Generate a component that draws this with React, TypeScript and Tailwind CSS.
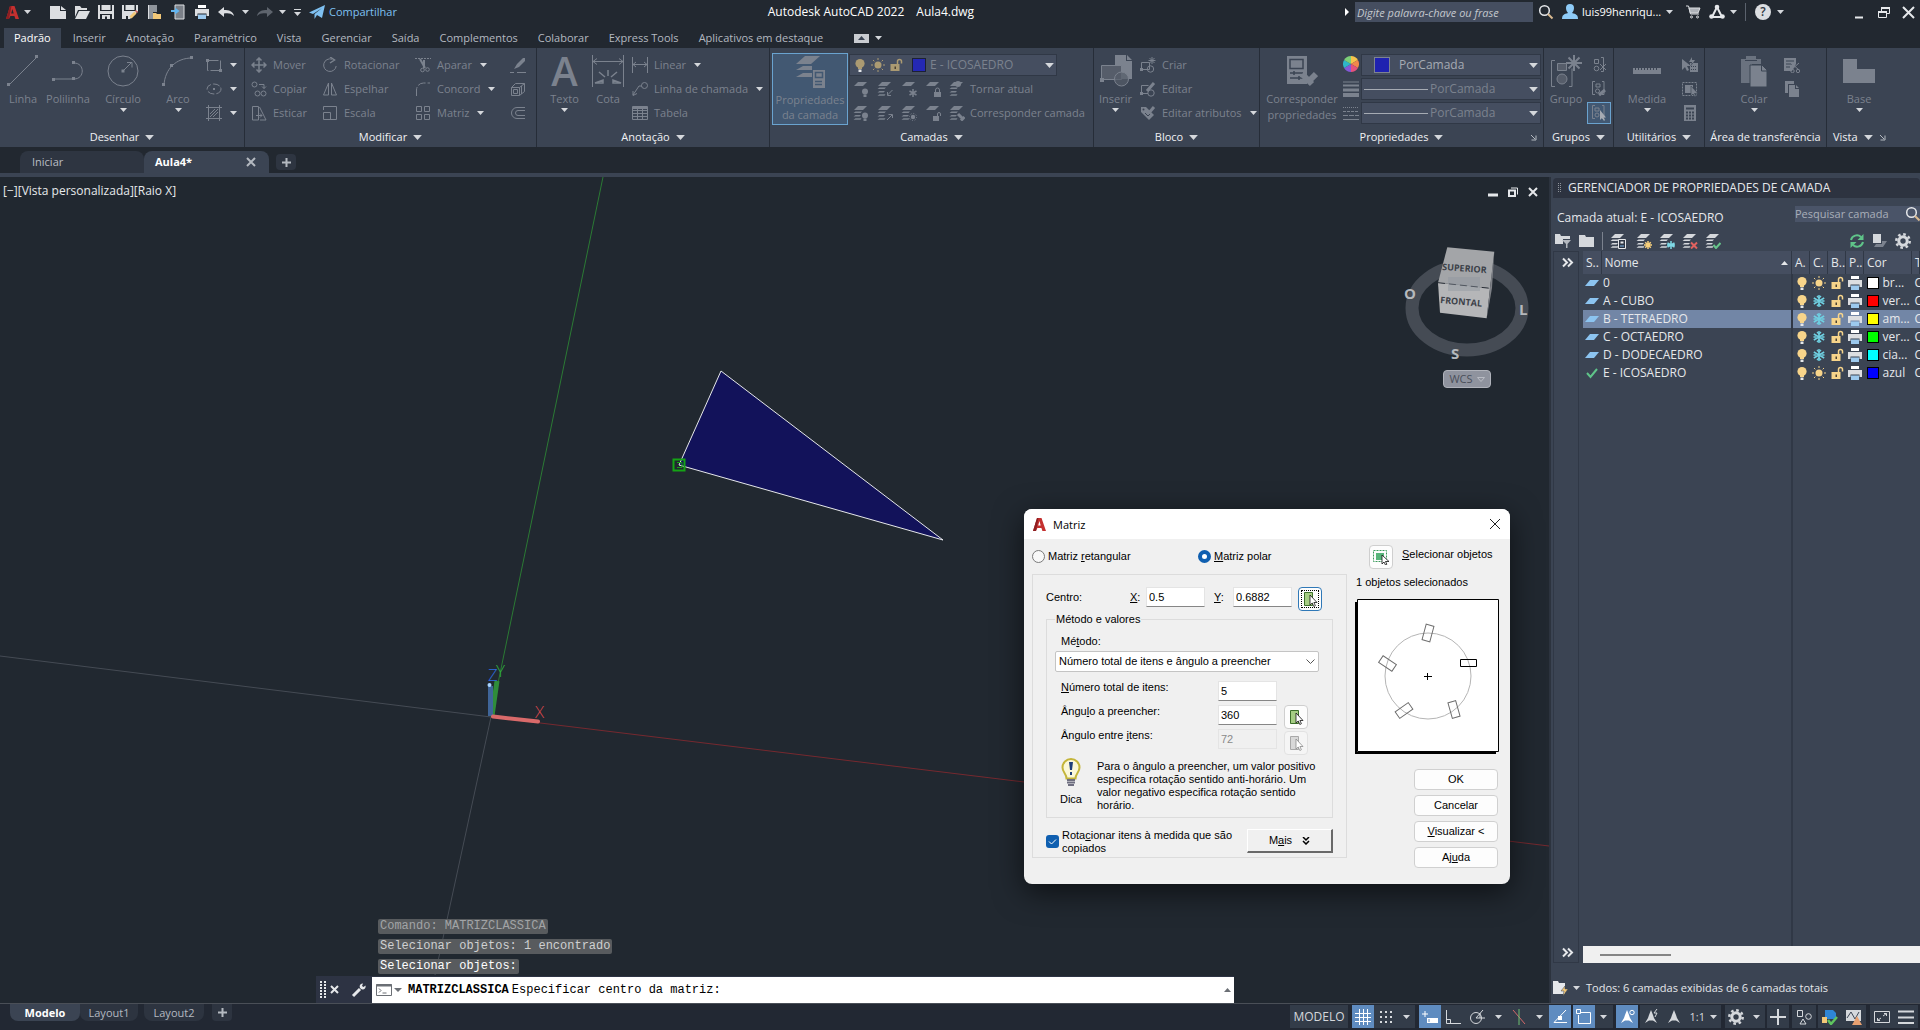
import type { ReactNode } from 'react';

interface IconProps {
  children: ReactNode;
  size?: number;
  className?: string;
}

function Ico({ children, size = 16, className = '' }: IconProps) {
  return (
    <svg
      width={size}
      height={size}
      viewBox={`0 0 ${size} ${size}`}
      fill="none"
      stroke="currentColor"
      className={`shrink-0 ${className}`}
      aria-hidden="true"
    >
      {children}
    </svg>
  );
}

function Caret({ className = '', large = false }: { className?: string; large?: boolean }) {
  return (
    <svg width={large ? 9 : 7} height={large ? 5 : 4} viewBox="0 0 7 4" className={`shrink-0 ${className}`} aria-hidden="true">
      <path d="M0 0h7L3.500 4z" fill="#d5d8dc" />
    </svg>
  );
}

function AutocadLogo({ className = '' }: { className?: string }) {
  return (
    <svg width="15" height="15" viewBox="0 0 15 15" className={`shrink-0 ${className}`} aria-hidden="true">
      <path d="M1 14L5 1h4.500L14 14h-3.600l-1-3H5.400l-1.400 3zM6.200 8.500h2.500L7.400 4z" fill="#c4302f" fillRule="evenodd" />
      <path d="M1 14L5 1h1.500L4 14z" fill="#8c1f22" />
    </svg>
  );
}

/* ---------- layer glyphs ---------- */

type Badge = 'bulb' | 'sun' | 'snow' | 'lock' | 'unlock' | 'in' | 'out' | 'brush' | 'dot' | 'star' | 'freeze' | 'delete' | 'check' | 'doc';

function BadgeShape({ badge }: { badge: Badge }) {
  switch (badge) {
    case 'bulb':
      return <g stroke="none" fill="currentColor"><circle cx="12" cy="10.500" r="3" /><path d="M10.500 13.500h3V16h-3z" /></g>;
    case 'sun':
      return <g><circle cx="12" cy="12" r="2.200" fill="currentColor" stroke="none" /><circle cx="12" cy="12" r="3.600" strokeDasharray="1 1.800" /></g>;
    case 'snow':
      return <path d="M12 8v8M8.500 10l7 4M15.500 10l-7 4" strokeWidth="1.500" />;
    case 'lock':
      return <g><path d="M9 11h7v5H9z" fill="currentColor" stroke="none" /><path d="M10.500 11V9a2 2 0 014 0v2" /></g>;
    case 'unlock':
      return <g><path d="M8 11h6v5H8z" fill="currentColor" stroke="none" /><path d="M12.500 11V9a1.500 1.500 0 013 0v2" /></g>;
    case 'in':
      return <path d="M15.500 9l-5 5M10.500 11v3.500H14" />;
    case 'out':
      return <path d="M10 15l5-5M11.500 9.500H15.500V13" />;
    case 'brush':
      return <path d="M9 9l5 5M12 15.500l3.500-3.500" strokeWidth="3" />;
    case 'dot':
      return <circle cx="9" cy="3" r="3" fill="currentColor" stroke="none" />;
    case 'star':
      return <path d="M12 8v8M8 12h8M9.200 9.200l5.600 5.600M14.800 9.200l-5.600 5.600" stroke="#f6cf7c" strokeWidth="1.500" />;
    case 'freeze':
      return <path d="M12 8v8M8.500 10l7 4M15.500 10l-7 4M8 12h8" stroke="#7fd9e6" strokeWidth="1.500" />;
    case 'delete':
      return <path d="M9 9.500l6 6M15 9.500l-6 6" stroke="#e0625f" strokeWidth="2" />;
    case 'check':
      return <path d="M8.500 12l2.500 3 4.500-5" stroke="#67c58b" strokeWidth="2" />;
    case 'doc':
      return <g><path d="M8.500 6.500h7v9h-7z" fill="#2d3543" stroke="#e6e8eb" /><path d="M10.500 8.500h3v2h-3z" fill="#e6e8eb" stroke="none" /><path d="M10 13h4" stroke="#7fb6e8" /></g>;
  }
}

function LayerIcon({ badge, single = false }: { badge: Badge; single?: boolean }) {
  return (
    <Ico>
      <g stroke="none" fill="currentColor">
        <path d="M5 1h9l-4 4H1z" />
        {!single && <path d="M2.500 6.500H9L7.500 8h-7zM2.500 10H8l-1.500 1.500h-6zM2.500 13.300h6L7.500 14.800h-7z" />}
      </g>
      <BadgeShape badge={badge} />
    </Ico>
  );
}

function Bulb({ color = '#f7d48a' }: { color?: string }) {
  return (
    <Ico>
      <circle cx="8" cy="6.500" r="4.600" fill={color} stroke="none" />
      <path d="M6 10h4v2H6z" fill={color} stroke="none" />
      <path d="M6.500 12.500h3V15h-3z" fill="#e6e8eb" stroke="none" />
    </Ico>
  );
}

function Sun({ color = '#f7d48a' }: { color?: string }) {
  return (
    <Ico>
      <circle cx="8" cy="8" r="3.500" fill={color} stroke="none" />
      <path d="M8 1v2M8 13v2M1 8h2M13 8h2M3 3l1.300 1.300M11.700 11.700L13 13M13 3l-1.300 1.300M4.300 11.700L3 13" stroke={color} />
    </Ico>
  );
}

function Snow() {
  return (
    <Ico>
      <g stroke="#6fd0e2" strokeWidth="1.500">
        <path d="M8 2v12M2.800 5l10.400 6M13.200 5L2.800 11" />
        <path d="M6 3l2 2 2-2M6 13l2-2 2 2M2.500 8h3M10.500 8h3" />
      </g>
    </Ico>
  );
}

function Unlock({ color = '#f7d48a' }: { color?: string }) {
  return (
    <Ico>
      <path d="M2.500 7h9v7h-9z" fill={color} stroke="none" />
      <path d="M9.500 7.500V4.500a2 2 0 014 0v2" stroke={color} strokeWidth="1.500" />
      <path d="M6.500 9.500h1.500V12H6.500z" fill="#4a4030" stroke="none" />
    </Ico>
  );
}

function Printer({ className = '' }: { className?: string }) {
  return (
    <Ico className={className}>
      <g stroke="none">
        <path d="M4 1h8v3H4z" fill="#fff" />
        <path d="M1 5h14v7h-2.500V9.500h-9V12H1z" fill="#dcdee1" />
        <path d="M4 10.500h8V15H4z" fill="#9cc9ee" />
      </g>
    </Ico>
  );
}

function Magnifier() {
  return (
    <Ico>
      <circle cx="6.500" cy="6.500" r="4.800" stroke="#e6e8eb" strokeWidth="1.500" />
      <path d="M10 10l4.500 4.500" stroke="#d9b98f" strokeWidth="2" />
    </Ico>
  );
}

/* ---------- title bar ---------- */

function QuickAccess() {
  const btn = 'flex w-6 justify-center text-[#dcdee1]';
  return (
    <div className="flex items-center">
      <button aria-label="Menu do aplicativo" className="flex items-center gap-1 pl-[5px] pr-[15px]">
        <AutocadLogo />
        <Caret />
      </button>
      <button aria-label="Novo" className={btn}>
        <Ico><path d="M0 2h10v5h6v8H0zM11 2l5 4h-5z" fill="currentColor" stroke="none" /></Ico>
      </button>
      <button aria-label="Abrir" className={btn}>
        <Ico><path d="M1 2h5l1.500 2H13v2H4L1 13zM5 7h11l-4 8H1z" fill="currentColor" stroke="none" /></Ico>
      </button>
      <button aria-label="Salvar" className={btn}>
        <Ico><path d="M0 1h2v6h12V1h2v14h-2v-5H2v5H0zM3.500 1h9v5h-9zM4 11h8v4h-3v-2.500H7V15H4z" fill="currentColor" stroke="none" /></Ico>
      </button>
      <button aria-label="Salvar como" className={btn}>
        <Ico>
          <path d="M0 1h2v6h12V1h2v6L8 15H6v-3H4v3H0zM3.500 1h9v5h-9z" fill="currentColor" stroke="none" />
          <path d="M8.500 13.500l5-5" stroke="#f3c878" strokeWidth="3" />
          <path d="M14 8l1-1" stroke="#d9645c" strokeWidth="3" />
        </Ico>
      </button>
      <button aria-label="Abrir da web" className={btn}>
        <Ico>
          <path d="M2 1h9v7H7v7H2z" fill="#8f949b" stroke="none" />
          <path d="M7 9h3l1 1h4v5H7z" fill="#f3c878" stroke="none" />
          <path d="M2.500 1v14" />
        </Ico>
      </button>
      <button aria-label="Salvar na web" className={btn}>
        <Ico>
          <path d="M5 1h9v14H5z" fill="#7b8088" stroke="#dcdee1" />
          <path d="M1 6h4V3.500L9.500 7 5 10.500V8H1z" fill="#63b5f0" stroke="none" />
        </Ico>
      </button>
      <button aria-label="Plotar" className={btn}><Printer /></button>
      <button aria-label="Desfazer" className={btn}>
        <Ico><path d="M0 8l6-5v3c5 0 9 1 10 6-3-3-6-3-10-2.500V13z" fill="currentColor" stroke="none" /></Ico>
      </button>
      <Caret className="ml-1 mr-1" />
      <button aria-label="Refazer" className="flex w-6 justify-center text-[#5e646d]">
        <Ico><path d="M16 8l-6-5v3C5 6 1 7 0 12c3-3 6-3 10-2.500V13z" fill="currentColor" stroke="none" /></Ico>
      </button>
      <Caret className="ml-[2px]" />
      <span className="mx-2 flex flex-col items-center gap-[2px]">
        <span className="h-px w-[7px] bg-[#d5d8dc]" />
        <Caret />
      </span>
      <button className="flex items-center gap-1 text-[11px] text-[#7fc1f2]">
        <Ico><path d="M0 8.500L16 1l-3 13-5-3-2.500 4V10L13 4l-9 6z" fill="currentColor" stroke="none" /></Ico>
        Compartilhar
      </button>
    </div>
  );
}

function TitleBar() {
  return (
    <header className="flex h-6 items-center justify-between text-white">
      <QuickAccess />
      <h1 className="flex gap-3 whitespace-nowrap">
        <span>Autodesk AutoCAD 2022</span>
        <span>Aula4.dwg</span>
      </h1>
      <div className="flex items-center">
        <svg width="4" height="8" viewBox="0 0 4 8" className="mr-[6px]" aria-hidden="true"><path d="M0 0l4 4-4 4z" fill="#fff" /></svg>
        <input
          aria-label="Pesquisa"
          placeholder="Digite palavra-chave ou frase"
          className="h-5 w-[178px] bg-[#454e60] px-[2px] text-[11px] italic placeholder:text-[#c3c7cd]"
        />
        <button aria-label="Pesquisar" className="ml-[5px]"><Magnifier /></button>
        <button className="ml-2 flex items-center gap-1">
          <Ico><path d="M8 0a4 4 0 014 4c0 2-1 4-2 5 4 1 6 2 6 6H0c0-4 2-5 6-6-1-1-2-3-2-5a4 4 0 014-4z" fill="#8ecbf7" stroke="none" /></Ico>
          <span className="w-20 whitespace-nowrap text-left text-[11px]">luis99henriqu...</span>
          <Caret />
        </button>
        <button aria-label="Autodesk App Store" className="ml-3 text-[#dcdee1]">
          <Ico><path d="M1 2h2.500l2 8H14" /><path d="M4 4h11l-2 5H5.300z" fill="#aeb2b8" /><circle cx="6.500" cy="13" r="1" /><circle cx="12.500" cy="13" r="1" /></Ico>
        </button>
        <button aria-label="Conectividade" className="ml-2 flex items-center gap-[5px] text-[#e6e8eb]">
          <Ico><path d="M8 3l5 10H3z" strokeWidth="2" /><circle cx="8" cy="3" r="2.300" fill="currentColor" stroke="none" /><circle cx="2.500" cy="12.500" r="2.300" fill="currentColor" stroke="none" /><circle cx="13.500" cy="12.500" r="2.300" fill="currentColor" stroke="none" /></Ico>
          <Caret />
        </button>
        <span className="ml-2 h-[18px] w-px bg-[#5b626d]" />
        <button aria-label="Ajuda" className="ml-[9px] flex items-center gap-[6px]">
          <span className="flex size-4 items-center justify-center rounded-full bg-[#dcdee1] text-[12px] leading-4 font-semibold text-[#30363f]">?</span>
          <Caret />
        </button>
        <div className="ml-[68px] mr-1 flex gap-2 text-[#e6e8eb]">
          <button aria-label="Minimizar"><Ico><path d="M3 13.500h8" strokeWidth="2" /></Ico></button>
          <button aria-label="Restaurar"><Ico><path d="M5.500 4.500h8v5h-8z" /><path d="M5 4h9" strokeWidth="2" /><path d="M2.500 8.500h8v5h-8z" fill="#222830" /><path d="M2 8h9" strokeWidth="2" /></Ico></button>
          <button aria-label="Fechar"><Ico><path d="M3 3l11 11M14 3L3 14" strokeWidth="2" /></Ico></button>
        </div>
      </div>
    </header>
  );
}

const ribbonTabs = ['Padrão', 'Inserir', 'Anotação', 'Paramétrico', 'Vista', 'Gerenciar', 'Saída', 'Complementos', 'Colaborar', 'Express Tools', 'Aplicativos em destaque'];

function RibbonTabs() {
  return (
    <nav className="mt-1 flex h-5 items-center pl-1 text-[11px] text-[#b4b9c0]">
      {ribbonTabs.map((t, i) => (
        <button
          key={t}
          className={`h-5 whitespace-nowrap px-[10px] ${i === 0 ? 'mr-[2px] bg-[#3b4453] text-white' : ''}`}
        >
          {t}
        </button>
      ))}
      <button aria-label="Minimizar faixa de opções" className="ml-[21px] flex items-center gap-[6px]">
        <span className="flex h-[9px] w-[15px] items-center justify-center bg-[#c9ccd1]">
          <svg width="7" height="4" viewBox="0 0 7 4" aria-hidden="true"><path d="M0 4h7L3.500 0z" fill="#3b4453" /></svg>
        </span>
        <Caret />
      </button>
    </nav>
  );
}

/* ---------- ribbon ---------- */

interface PanelProps {
  title: string;
  className: string;
  caret?: boolean;
  launcher?: boolean;
  children: ReactNode;
}

function Panel({ title, className, caret = true, launcher = false, children }: PanelProps) {
  return (
    <section className={`relative flex shrink-0 flex-col border-r border-[#262d38] pt-[5px] ${className}`}>
      <div className="flex h-[72px]">{children}</div>
      <h2 className="flex h-[22px] items-center justify-center gap-[6px] pt-[2px] whitespace-nowrap text-[#f0f1f3]">
        {title}
        {caret && <Caret large />}
        {launcher && (
          <Ico size={7} className="absolute right-[6px] text-[#b4b9c0]"><path d="M1 1l4 4M6 1.500V6H1.500" /></Ico>
        )}
      </h2>
    </section>
  );
}

function Big({ label, icon, className = '', arrow = false }: { label: ReactNode; icon: ReactNode; className?: string; arrow?: boolean }) {
  return (
    <button className={`flex shrink-0 flex-col items-center pt-[2px] leading-4 whitespace-nowrap ${className}`}>
      <span className="mb-1 flex h-8 w-8 items-center justify-center">{icon}</span>
      <span>{label}</span>
      {arrow && <Caret className="mt-px" />}
    </button>
  );
}

function Small({ label, icon, arrow = false }: { label?: string; icon: ReactNode; arrow?: boolean }) {
  return (
    <button className="flex h-6 items-center gap-[6px] whitespace-nowrap">
      {icon}
      {label}
      {arrow && <Caret className="ml-[2px]" />}
    </button>
  );
}

function Col({ children, className = '' }: { children: ReactNode; className?: string }) {
  return <div className={`flex shrink-0 flex-col items-start ${className}`}>{children}</div>;
}

function DrawPanel() {
  return (
    <Panel title="Desenhar" className="w-[245px]">
      <Big className="w-[46px]" label="Linha" icon={<Ico size={32}><path d="M2 30L30 2" /><path d="M0 28h3v3H0zM28 0h3v3h-3z" fill="currentColor" stroke="none" /></Ico>} />
      <Big className="w-11" label="Polilinha" icon={<Ico size={32}><path d="M1 24h21c11 0 11-16 0-16" /><path d="M0 23h3v3H0zM20 22h3v3h-3zM20 6h3v3h-3z" fill="currentColor" stroke="none" /></Ico>} />
      <Big className="ml-1 w-[58px]" arrow label="Círculo" icon={<Ico size={32}><circle cx="16" cy="16" r="15" /><path d="M16 16l8-8M20 7.500h5v5" /><path d="M14.500 14.500h3v3h-3z" fill="currentColor" stroke="none" /></Ico>} />
      <Big className="w-[52px]" arrow label="Arco" icon={<Ico size={32}><path d="M2 30C3 14 14 3 30 3" /><path d="M0 28h3v3H0zM8 9h3v3H8zM28 1h3v3h-3z" fill="currentColor" stroke="none" /></Ico>} />
      <Col className="ml-[2px]">
        <Small arrow icon={<Ico><path d="M1.500 3.500h13v10h-13z" strokeDasharray="11 2 20 2" /><path d="M0 2h3v3H0zM13 12h3v3h-3z" fill="currentColor" stroke="none" /></Ico>} />
        <Small arrow icon={<Ico><ellipse cx="8" cy="8" rx="7" ry="5" strokeDasharray="7 2" /><path d="M7 7h2v2H7z" fill="currentColor" stroke="none" /></Ico>} />
        <Small arrow icon={<Ico><path d="M0 2.500h16M0 13.500h16M2.500 0v16M13.500 0v16M4 9l5-5M4 12l8-8M7 12l5-5" /></Ico>} />
      </Col>
    </Panel>
  );
}

function ModifyPanel() {
  return (
    <Panel title="Modificar" className="w-[292px]">
      <Col className="ml-[6px] w-[71px]">
        <Small label="Mover" icon={<Ico><path d="M8 1v14M1 8h14M5.500 3.500L8 1l2.500 2.500M5.500 12.500L8 15l2.500-2.500M3.500 5.500L1 8l2.500 2.500M12.500 5.500L15 8l-2.500 2.500" strokeWidth="1.500" /></Ico>} />
        <Small label="Copiar" icon={<Ico><circle cx="3.500" cy="3.500" r="2.500" /><circle cx="6.500" cy="12.500" r="2.500" /><circle cx="12.500" cy="12.500" r="2.500" /><path d="M8 3.500h5v4M11 5.500l2 2 2-2" /></Ico>} />
        <Small label="Esticar" icon={<Ico><path d="M1.500 15V1.500h6V15zM8.500 2l6.500 13H9M5 10.500h6M9 8.500l2 2-2 2" /></Ico>} />
      </Col>
      <Col className="w-[93px]">
        <Small label="Rotacionar" icon={<Ico><path d="M10 2.200A6.300 6.300 0 1014.200 9" /><path d="M8 0l4.500 3L8 6" strokeWidth="1.500" /></Ico>} />
        <Small label="Espelhar" icon={<Ico><path d="M6.500 2v12h-5zM9.500 2v12h5z" /></Ico>} />
        <Small label="Escala" icon={<Ico><path d="M1.500 5V1.500h13v13H8M1.500 7.500h7v7h-7z" /></Ico>} />
      </Col>
      <Col className="w-[95px]">
        <Small arrow label="Aparar" icon={<Ico><path d="M0 1.500h16" strokeDasharray="2 1" /><path d="M5 2l5 9M9 3v8" strokeWidth="2" /><circle cx="7.500" cy="13" r="1.800" /><circle cx="12.500" cy="12.500" r="1.800" /></Ico>} />
        <Small arrow label="Concord" icon={<Ico><path d="M1.500 15V9a7 7 0 017-7H15" strokeDasharray="9 2 8 2" /></Ico>} />
        <Small arrow label="Matriz" icon={<Ico><path d="M1.500 1.500h5v5h-5zM9.500 1.500h5v5h-5zM1.500 9.500h5v5h-5zM9.500 9.500h5v5h-5z" /></Ico>} />
      </Col>
      <Col>
        <Small icon={<Ico><path d="M4 12l3-5 6-6h2v3l-6 6z" fill="currentColor" stroke="none" /><path d="M0 15.500h4M7 15.500h9" /></Ico>} />
        <Small icon={<Ico><path d="M1.500 6.500h8v8h-8zM3.500 8.500h4v4h-4zM1.500 6.500l4-4h9l-5 4M14.500 2.500v8l-5 4M11.500 5v8" /></Ico>} />
        <Small icon={<Ico><path d="M15 2.500H7a5.500 5.500 0 000 11h8M15 5.500H8a2.500 2.500 0 000 5h7" /></Ico>} />
      </Col>
    </Panel>
  );
}

function AnnotatePanel() {
  return (
    <Panel title="Anotação" className="w-[233px]">
      <Big className="ml-[5px] w-[45px]" arrow label="Texto" icon={<span className="text-[40px] leading-8 font-semibold">A</span>} />
      <Big className="w-[42px]" label="Cota" icon={<Ico size={32}><path d="M.5 0v32M31.500 0v32M1 6.500h30M5 3.500L1 6.500l4 3M27 3.500l4 3-4 3" /><path d="M3 28l8-3v3zM29 28l-8-3v3zM7 17l6 5M16 15v6M25 17l-6 5" strokeWidth="1.500" /></Ico>} />
      <Col className="ml-[3px]">
        <Small arrow label="Linear" icon={<Ico><path d="M.5 0v16M15.500 0v16M1 7.500h14M4 5L1 7.500 4 10M12 5l3 2.500L12 10" /></Ico>} />
        <Small arrow label="Linha de chamada" icon={<Ico><path d="M1 14l6-9h3M1 10v4.500l4-2" /><circle cx="12.500" cy="4.500" r="3" /></Ico>} />
        <Small label="Tabela" icon={<Ico><path d="M.5 1.500h15v13H.5zM.5 5.500h15M.5 8.500h15M.5 11.500h15M5.500 4v10M10.500 4v10" /><path d="M1 3h14" strokeWidth="2" /></Ico>} />
      </Col>
    </Panel>
  );
}

function LayerPanelRibbon() {
  const dim = '#ab9a72';
  return (
    <Panel title="Camadas" className="w-[324px]">
      <button className="ml-[2px] flex w-[76px] shrink-0 flex-col items-center border border-[#6aa3cf] bg-[#425872] leading-[15px]">
        <Ico size={32} className="mt-[2px] mb-1">
          <g fill="currentColor" stroke="none">
            <path d="M11 0h15l-9 8H2zM9 10h9v4H2zM9 17h9v4H2z" />
            <path d="M19 14h12v18H19z" />
          </g>
          <path d="M21.500 16.500h7v5h-7zM21 25.500h7M21 28.500h7" stroke="#425872" strokeWidth="1.500" />
        </Ico>
        <span>Propriedades</span>
        <span>da camada</span>
      </button>
      <div className="ml-px flex flex-col">
        <label className="mt-[1px] flex h-[22px] w-[208px] items-center gap-[2px] border border-[#303846] bg-[#454e60] pl-[2px] text-[12px]">
          <Bulb color={dim} />
          <Sun color={dim} />
          <Unlock color={dim} />
          <span className="ml-[6px] size-[14px] shrink-0 border border-[#1c2133] bg-[#2428b4]" />
          <select aria-label="Camada" className="ml-[2px] min-w-0 flex-1 appearance-none bg-transparent">
            <option>E - ICOSAEDRO</option>
          </select>
          <Caret large className="mr-[2px]" />
        </label>
        <div className="mt-[1px] ml-1 flex h-6 items-center gap-2">
          <LayerIcon single badge="bulb" />
          <LayerIcon badge="in" />
          <LayerIcon single badge="snow" />
          <LayerIcon single badge="lock" />
          <button className="flex items-center gap-[5px]"><LayerIcon badge="dot" />Tornar atual</button>
        </div>
        <div className="ml-1 flex h-6 items-center gap-2">
          <LayerIcon badge="bulb" />
          <LayerIcon badge="out" />
          <LayerIcon badge="sun" />
          <LayerIcon single badge="unlock" />
          <button className="flex items-center gap-[5px] whitespace-nowrap"><LayerIcon badge="brush" />Corresponder camada</button>
        </div>
      </div>
    </Panel>
  );
}

function BlockPanel() {
  return (
    <Panel title="Bloco" className="w-[166px]">
      <Big className="w-[43px]" arrow label="Inserir" icon={<Ico size={32}><path d="M15 0h11v6h6v18H15z" fill="currentColor" stroke="none" /><path d="M1.500 10.500h20v14h-20z" fill="#565d6a" /><circle cx="21.500" cy="24" r="7" fill="#565d6a" fillOpacity=".7" /><path d="M27 0l5 5h-5zM0 23h4v4H0z" fill="currentColor" stroke="none" /></Ico>} />
      <Col className="ml-[3px]">
        <Small label="Criar" icon={<Ico><path d="M1.500 5.500h8v7h-8z" /><circle cx="10.500" cy="12" r="3.200" /><path d="M12 0v7M8.500 3.500h7M9.500 1l5 5M14.500 1l-5 5" /><path d="M0 11h3v3H0z" fill="currentColor" stroke="none" /></Ico>} />
        <Small label="Editar" icon={<Ico><path d="M1.500 4.500h7M1.500 4.500v8H8" /><circle cx="11" cy="12" r="3.200" /><path d="M7 10l7-8" strokeWidth="3" /><path d="M0 11h3v3H0z" fill="currentColor" stroke="none" /></Ico>} />
        <Small arrow label="Editar atributos" icon={<Ico><path d="M1 2h5l8 8-5 5-8-8z" fill="currentColor" stroke="none" /><path d="M8 9l6-7" strokeWidth="3" /><circle cx="3.500" cy="4.500" r="1" fill="#3b4453" stroke="none" /><path d="M5 8l3 3 2-2" stroke="#3b4453" /></Ico>} />
      </Col>
    </Panel>
  );
}

function PropSelect({ label, swatch = false }: { label: string; swatch?: boolean }) {
  return (
    <label className="flex h-[22px] w-[180px] items-center border border-[#303846] bg-[#454e60] text-[12px]">
      {swatch ? (
        <span className="ml-3 mr-[9px] size-4 shrink-0 border border-[#7d8390] bg-[#1f22b0]" />
      ) : (
        <span className="ml-[2px] h-px w-16 shrink-0 bg-[#a6abb3]" />
      )}
      <select aria-label={label} className={`min-w-0 flex-1 appearance-none bg-transparent ${swatch ? 'text-[#a6abb3]' : 'pl-[2px]'}`}>
        <option>PorCamada</option>
      </select>
      <Caret large className="mr-[2px]" />
    </label>
  );
}

function PropertiesPanel() {
  return (
    <Panel title="Propriedades" className="w-[284px]" launcher>
      <Big
        className="ml-[2px] w-20"
        label={<>Corresponder<br />propriedades</>}
        icon={<Ico size={32}><path d="M1 1h20v28H1z" fill="currentColor" stroke="none" /><path d="M4 4.500h13v9H4zM4 18h13M4 23h13M8 16v4M13 21v4" stroke="#3b4453" strokeWidth="1.500" /><path d="M16 19l10 10M24 25l6-6" strokeWidth="6" /></Ico>}
      />
      <Col className="ml-[1px]">
        <div className="mt-[1px] flex h-[23px] items-start gap-[2px]">
          <svg width="16" height="16" viewBox="0 0 16 16" className="mt-[2px]" aria-hidden="true">
            <path d="M8 8V0A8 8 0 0114.900 4z" fill="#f6c34c" />
            <path d="M8 8l6.900-4a8 8 0 010 8z" fill="#f2884b" />
            <path d="M8 8l6.900 4A8 8 0 018 16z" fill="#e5527c" />
            <path d="M8 8v8a8 8 0 01-6.900-4z" fill="#8458d8" />
            <path d="M8 8l-6.900 4a8 8 0 010-8z" fill="#2fb6c9" />
            <path d="M8 8L1.100 4A8 8 0 018 0z" fill="#7ccf78" />
          </svg>
          <PropSelect label="Cor do objeto" swatch />
        </div>
        <div className="flex h-6 items-center gap-[2px]">
          <Ico><path d="M0 1h16" /><path d="M0 4.500h16" strokeWidth="2" /><path d="M0 9h16" strokeWidth="3" /><path d="M0 14h16" strokeWidth="4" /></Ico>
          <PropSelect label="Espessura da linha" />
        </div>
        <div className="flex h-6 items-center gap-[2px]">
          <Ico><path d="M0 2.500h16" strokeDasharray="1 1" /><path d="M0 6.500h16" strokeDasharray="3 1" /><path d="M0 10.500h16" strokeDasharray="5 1" /><path d="M0 14.500h16" /></Ico>
          <PropSelect label="Tipo de linha" />
        </div>
      </Col>
    </Panel>
  );
}

function RibbonTail() {
  const bracket = <path d="M4 .5H1.500v13H4M11 .5h2v13h-2" />;
  return (
    <>
      <Panel title="Grupos" className="w-[70px]">
        <Big className="ml-[4px] w-9" label="Grupo" icon={<Ico size={32}><path d="M5 5.500H1.500v26H5M19 31.500h3v-18" /><path d="M7.500 8.500h9v7h-9z" fill="#565d6a" /><circle cx="12" cy="24" r="5" fill="#565d6a" /><path d="M24 0v16M16 8h16M18.500 2.500l11 11M29.500 2.500l-11 11" strokeWidth="2" /></Ico>} />
        <Col className="ml-[3px]">
          <div className="flex h-6 w-6 items-center justify-center"><Ico><path d="M3.500 2.500h4v4h-4zM10 .5h2.500v14H10" /><circle cx="5.500" cy="11.500" r="2.300" /><path d="M9 7l6 6M15 7l-6 6" /></Ico></div>
          <div className="flex h-6 w-6 items-center justify-center"><Ico>{bracket}<path d="M5 3h4v3H5z" /><circle cx="6.500" cy="10" r="2" /><path d="M8 14l6-5" strokeWidth="3" /></Ico></div>
          <button aria-label="Seleção de grupo" className="mt-[1px] flex h-[22px] w-6 items-center justify-center border border-[#6aa3cf] bg-[#425872]"><Ico>{bracket}<path d="M4 3h4v3H4z" /><circle cx="6" cy="10" r="2" /><path d="M9 5v10l2-2 2 3 1-1-1.500-2.500H15z" fill="#a6abb3" stroke="none" /></Ico></button>
        </Col>
      </Panel>
      <Panel title="Utilitários" className="w-[91px]">
        <Big className="ml-[8px] w-[50px]" arrow label="Medida" icon={<Ico size={32}><path d="M2 13h28v6H2z" fill="currentColor" stroke="none" /><path d="M4.500 13v2M7.500 13v2M10.500 13v2M13.500 13v2M16.500 13v2M19.500 13v2M22.500 13v2M25.500 13v2" stroke="#3b4453" /></Ico>} />
        <Col className="ml-[10px]">
          <Small icon={<Ico><path d="M0 2v11l3-3 2 4 2-1-2-4h4zM10 0l-3 5h3l-1 4 4-6h-3zM8 6h8v9H8z" fill="currentColor" stroke="none" /><path d="M9 9.500h6M9 12.500h6" stroke="#3b4453" strokeDasharray="1 1" /></Ico>} />
          <Small icon={<Ico><path d="M.5 1.500h14v13H.5z" strokeDasharray="2 1" /><path d="M3 4h8v8H3z" fill="currentColor" stroke="none" /><path d="M9 5v10l2-2 2 3 1-1-1.500-2.500H16z" fill="currentColor" stroke="#3b4453" strokeWidth=".6" /></Ico>} />
          <Small icon={<Ico><path d="M2 0h12v16H2z" fill="currentColor" stroke="none" /><path d="M4 3.500h8" stroke="#3b4453" strokeWidth="2" /><path d="M4 7.500h8M4 10.500h8M4 13.500h8" stroke="#3b4453" strokeWidth="2" strokeDasharray="2 1" /></Ico>} />
        </Col>
      </Panel>
      <Panel title="Área de transferência" className="w-[122px]" caret={false}>
        <Big className="ml-[24px] w-[50px]" arrow label="Colar" icon={<Ico size={32}><path d="M3 4h5V1h10v3h5v5h-9v19H3z" fill="currentColor" stroke="none" opacity=".75" /><path d="M7 5.500h12" stroke="#3b4453" /><path d="M12 10h12l5 5v17H12z" fill="currentColor" stroke="#3b4453" /><path d="M23.500 10v6H29" stroke="#3b4453" /></Ico>} />
        <Col className="ml-[5px]">
          <Small icon={<Ico><path d="M0 1h12v6l-4 7H0z" fill="currentColor" stroke="none" /><path d="M2 4h8M2 7h6M2 10h4" stroke="#3b4453" /><path d="M7 6l8 7M15 6l-8 7" /><circle cx="8.500" cy="14" r="1.700" /><circle cx="14" cy="14" r="1.700" /></Ico>} />
          <Small icon={<Ico><path d="M1 0h9v3H4v9H1z" fill="currentColor" stroke="none" /><path d="M5 4h6v4h4v8H5zM12 4l3 3h-3z" fill="currentColor" stroke="none" /></Ico>} />
        </Col>
      </Panel>
      <section className="relative flex flex-1 flex-col pt-[5px]">
        <div className="flex h-[72px]">
          <Big className="ml-[7px] w-[50px]" arrow label="Base" icon={<Ico size={32}><path d="M0 4h14v10h18v14H0z" fill="currentColor" stroke="none" /></Ico>} />
        </div>
        <h2 className="flex h-[22px] items-center gap-[6px] pt-[2px] pl-[6px] text-[#f0f1f3]">
          Vista
          <Caret large />
          <Ico size={7} className="text-[#b4b9c0]"><path d="M1 1l4 4M6 1.500V6H1.500" /></Ico>
        </h2>
      </section>
    </>
  );
}

function Ribbon() {
  return (
    <div className="flex h-[99px] bg-[#3b4453] text-[11px] text-[#7b828e]">
      <DrawPanel />
      <ModifyPanel />
      <AnnotatePanel />
      <LayerPanelRibbon />
      <BlockPanel />
      <PropertiesPanel />
      <RibbonTail />
    </div>
  );
}

function FileTabs() {
  return (
    <nav className="flex h-[26px] items-end border-b-4 border-[#3b4453] pl-5 text-[11px] box-content">
      <button className="h-[22px] w-[124px] rounded-t-lg bg-[#2e3541] pl-3 text-left text-[#b9bdc4]">Iniciar</button>
      <div className="flex h-[22px] w-[125px] items-center rounded-t-lg bg-[#3b4453] pl-[11px]">
        <button className="font-bold text-white">Aula4*</button>
        <button aria-label="Fechar Aula4" className="ml-auto mr-[13px] text-[#b4b9c0]"><Ico size={10}><path d="M1 1l8 8M9 1L1 9" strokeWidth="2" /></Ico></button>
      </div>
      <button aria-label="Novo desenho" className="mb-[3px] ml-[7px] flex h-4 w-5 items-center justify-center rounded bg-[#2e3541] text-[#b4b9c0]"><Ico size={9}><path d="M4.500 0v9M0 4.500h9" strokeWidth="2" /></Ico></button>
    </nav>
  );
}

/* ---------- drawing area ---------- */

function Scene() {
  return (
    <svg width="1549" height="826" viewBox="0 177 1549 826" className="absolute left-0 top-0" aria-hidden="true">
      <path d="M0 656L491 717L435 975" stroke="#454b54" fill="none" />
      <path d="M603 177L491 717" stroke="#2b7a34" />
      <path d="M491 717L1549 846" stroke="#76292f" />
      <path d="M721 371L943 540L679 465z" fill="#12125a" stroke="#e6e8eb" />
      <path d="M673.500 459.500h11v11h-11z" fill="none" stroke="#15a315" strokeWidth="2" />
      <path d="M677 462.500h5v5h-5" fill="none" stroke="#15a315" />
      <path d="M492 716L497 681" stroke="#2f8c3a" strokeWidth="5" />
      <path d="M490.500 716V686" stroke="#3f6598" strokeWidth="5" />
      <path d="M493 716.500L538 721.500" stroke="#d96a6a" strokeWidth="4" strokeLinecap="round" />
      <circle cx="489.500" cy="685" r="2" fill="#a8d4ff" />
      <g fontSize="17" fontWeight="300" fontFamily="Open Sans, sans-serif">
        <text x="496" y="677" fill="#2fae3c">Y</text>
        <text x="488" y="681" fill="#2f6fe0">Z</text>
        <text x="535" y="718" fill="#d8474c">X</text>
      </g>
    </svg>
  );
}

function ViewCube() {
  return (
    <div className="absolute right-[16px] top-[65px] flex flex-col items-center">
      <svg width="132" height="125" viewBox="1401 242 132 125" aria-hidden="true">
        <ellipse cx="1467" cy="308" rx="55" ry="42" fill="none" stroke="#454b54" strokeWidth="13" />
        <path d="M1447.300 247.300L1494.300 251.700L1490 288.300L1438 282.700z" fill="#a3a5a8" />
        <path d="M1438 282.700L1490 288.300L1486.700 318.300L1440 312.700z" fill="#b5b6b8" />
        <path d="M1494.300 251.700L1492 288L1486.700 318.300L1490 288.300z" fill="#7d8086" />
        <path d="M1438 282.700L1490 288.300" stroke="#2a2f37" strokeDasharray="7 4" />
        <path d="M1448 277h32v14h-32z" fill="#8d949e" opacity=".4" />
        <g fontWeight="700" fontFamily="Open Sans, sans-serif">
          <text x="1442" y="270" fontSize="9" fill="#3c4149" transform="rotate(4 1442 270)">SUPERIOR</text>
          <text x="1440" y="303" fontSize="9" fill="#3c4149" transform="rotate(5 1440 303)">FRONTAL</text>
          <g fill="#b5b8bc" fontSize="15">
            <text x="1404" y="299">O</text>
            <text x="1519" y="315">L</text>
            <text x="1451" y="359">S</text>
          </g>
        </g>
      </svg>
      <button className="mt-[3px] flex h-[18px] w-12 items-center justify-center gap-1 rounded border border-[#b0b3bb] bg-[#8f939e] text-[11px] text-[#4a4f5a]">
        WCS
        <svg width="8" height="5" viewBox="0 0 8 5" aria-hidden="true"><path d="M.5 .5h7L4 4.500z" fill="none" stroke="#b9bcc4" /></svg>
      </button>
    </div>
  );
}

function CommandLine() {
  const line = 'w-fit rounded-[2px] bg-[#585b5e] px-[2px] leading-[15px]';
  return (
    <div className="absolute bottom-0 left-[316px] font-['Liberation_Mono',monospace] text-[12px]">
      <div className="mb-[2px] ml-[62px] flex flex-col gap-[5px]">
        <p className={`${line} text-[#a2a4a6]`}>Comando: MATRIZCLASSICA</p>
        <p className={`${line} text-[#cfd0d1]`}>Selecionar objetos: 1 encontrado</p>
        <p className={`${line} text-white`}>Selecionar objetos:</p>
      </div>
      <div className="flex h-[27px] items-center bg-[#2d3343] text-[#e6e8eb]">
        <svg width="6" height="18" viewBox="0 0 6 18" className="ml-1" aria-hidden="true"><path d="M1 0v18M5 0v18" stroke="#e6e8eb" strokeWidth="2" strokeDasharray="2 1" /></svg>
        <button aria-label="Fechar" className="flex w-4 justify-center"><Ico size={9}><path d="M1 1l7 7M8 1L1 8" strokeWidth="2" /></Ico></button>
        <button aria-label="Personalizar" className="ml-[7px] flex w-5 justify-center"><Ico><path d="M2 14l7-7" strokeWidth="3" /><path d="M14.500 3.500a3 3 0 11-2.500-2L11 4l1.500 1z" fill="currentColor" stroke="none" /></Ico></button>
        <label className="ml-[3px] flex h-[26px] w-[862px] items-center bg-white text-black">
          <Ico className="ml-1 text-[#6b6f75]"><path d="M.5 2.500h15v11H.5z" /><path d="M0 3.500h16" strokeWidth="2" /><path d="M3 6.500l2 2-2 2M6.500 11h4" /></Ico>
          <svg width="8" height="4" viewBox="0 0 8 4" className="ml-[2px]" aria-hidden="true"><path d="M0 0h8L4 4z" fill="#6b6f75" /></svg>
          <strong className="ml-[6px]">MATRIZCLASSICA</strong>
          <span className="ml-[3px]">Especificar centro da matriz:</span>
          <input aria-label="Linha de comando" className="min-w-0 flex-1 outline-none" />
          <svg width="7" height="4" viewBox="0 0 7 4" className="mr-[3px]" aria-hidden="true"><path d="M0 4h7L3.500 0z" fill="#6b6f75" /></svg>
        </label>
      </div>
    </div>
  );
}

/* ---------- array dialog ---------- */

function PickIcon({ off = false }: { off?: boolean }) {
  return (
    <Ico>
      <path d="M2.500 1.500h8v13h-8z" fill={off ? '#d8d8d8' : '#a5cd83'} stroke={off ? '#a8a8a8' : '#3c6e2a'} />
      <path d="M8 4v10l2.200-2 1.600 3.500 1.600-.8-1.500-3.200H15z" fill="#fff" stroke={off ? '#8a8a8a' : '#111'} strokeWidth=".8" />
    </Ico>
  );
}

function PickButton({ label, off = false }: { label: string; off?: boolean }) {
  return (
    <button aria-label={label} disabled={off} className={`flex size-6 shrink-0 items-center justify-center rounded border ${off ? 'border-[#e2e2e2] bg-[#f5f5f5]' : 'border-[#cfcfcf] bg-[#fdfdfd]'}`}>
      <PickIcon off={off} />
    </button>
  );
}

const dialogInput = 'h-5 w-[59px] shrink-0 border border-[#e4e4e4] border-b-[#868686] bg-white px-[2px] text-[11px]';

function ArrayPreview() {
  return (
    <svg width="144" height="155" viewBox="0 0 144 155" className="mt-[10px]" role="img" aria-label="Matriz polar">
      <path d="M0 3h2v150h139v2H0z" fill="#000" />
      <path d="M2.500 .5h141v152h-141z" fill="#fff" stroke="#000" />
      <circle cx="73" cy="77" r="43" fill="none" stroke="#b5b5b5" />
      <g fill="none" stroke="#6e6e6e">
        <path d="M69 26h8v16h-8z" transform="rotate(15 73 34)" />
        <path d="M28.500 56.500h8v16h-8z" transform="rotate(-56 32.500 64.500)" />
        <path d="M45 103.500h8v16h-8z" transform="rotate(55 49 111.500)" />
        <path d="M95 102.500h8v16h-8z" transform="rotate(-16 99 110.500)" />
      </g>
      <path d="M105.500 60.500h16v7h-16z" fill="none" stroke="#000" />
      <path d="M69 77.500h8M72.500 74v7" stroke="#000" />
    </svg>
  );
}

function ArrayDialog() {
  const push = 'h-[21px] w-[84px] rounded border border-[#d0d0d0] bg-[#fdfdfd]';
  return (
    <div
      role="dialog"
      aria-label="Matriz"
      className="absolute right-[39px] top-[332px] flex w-[486px] flex-col overflow-hidden rounded-lg bg-[#f0f0f0] pb-4 font-['Liberation_Sans',sans-serif] text-[11px] leading-[13px] text-black shadow-[0_8px_30px_rgba(0,0,0,0.6)]"
    >
      <div className="flex h-[30px] items-center bg-white pl-2 font-['Open_Sans',sans-serif]">
        <AutocadLogo />
        <span className="ml-[6px]">Matriz</span>
        <button aria-label="Fechar" className="ml-auto mr-[9px]"><Ico size={12}><path d="M1 1l10 10M11 1L1 11" stroke="#222" /></Ico></button>
      </div>
      <div className="flex">
        <div className="ml-2 w-[315px]">
          <div className="flex h-[35px] items-center">
            <label className="flex w-[166px] items-center gap-[3px]">
              <input type="radio" name="tipo" className="size-[13px] appearance-none rounded-full border border-[#7a7a7a] bg-[#f8f8f8]" />
              <span>Matriz <u>r</u>etangular</span>
            </label>
            <label className="flex items-center gap-[3px]">
              <input type="radio" name="tipo" defaultChecked className="size-[13px] appearance-none rounded-full border-4 border-[#0f5fb0] bg-white" />
              <span><u>M</u>atriz polar</span>
            </label>
          </div>
          <div className="border border-[#dcdcdc] pb-[2px] pl-[13px] pr-3">
            <div className="mt-3 flex h-6 items-start">
              <span className="w-[84px] pt-1">Centro:</span>
              <label htmlFor="cx" className="w-4 pt-1"><u>X</u>:</label>
              <input id="cx" defaultValue="0.5" className={dialogInput} />
              <label htmlFor="cy" className="ml-[9px] w-[19px] pt-1"><u>Y</u>:</label>
              <input id="cy" defaultValue="0.6882" className={dialogInput} />
              <button aria-label="Especificar centro" className="ml-[6px] flex size-6 shrink-0 items-center justify-center rounded border border-[#2f78b7] bg-[#fdfdfd]">
                <span className="flex border border-dotted border-black"><PickIcon /></span>
              </button>
            </div>
            <fieldset className="mt-[2px] w-[287px] border border-[#dcdcdc] pl-2">
              <legend className="px-[1px]">Método e valores</legend>
              <label htmlFor="metodo" className="mt-[9px] ml-[6px] block">Mé<u>t</u>odo:</label>
              <div className="relative mt-[3px] w-[264px]">
                <select id="metodo" className="h-[21px] w-full appearance-none rounded-[2px] border border-[#c4c4c4] bg-white px-[3px]">
                  <option>Número total de itens e ângulo a preencher</option>
                </select>
                <svg width="9" height="5" viewBox="0 0 9 5" className="pointer-events-none absolute right-1 top-2" aria-hidden="true"><path d="M.5 .5l4 4 4-4" fill="none" stroke="#555" /></svg>
              </div>
              <div className="mt-[9px] flex h-6 items-start pl-[6px]">
                <label htmlFor="itens" className="w-[157px]"><u>N</u>úmero total de itens:</label>
                <input id="itens" defaultValue="5" className={dialogInput} />
              </div>
              <div className="flex h-6 items-start pl-[6px]">
                <label htmlFor="angulo" className="w-[157px]">Ângu<u>l</u>o a preencher:</label>
                <input id="angulo" defaultValue="360" className={dialogInput} />
                <span className="ml-[7px]"><PickButton label="Indicar ângulo a preencher" /></span>
              </div>
              <div className="flex h-6 items-start pl-[6px]">
                <label htmlFor="entre" className="w-[157px]">Ângulo entre <u>i</u>tens:</label>
                <input id="entre" disabled defaultValue="72" className="h-5 w-[59px] shrink-0 border border-[#e4e4e4] bg-[#f0f0f0] px-[2px] text-[11px] text-[#8a8a8a]" />
                <span className="ml-[7px] pt-[2px]"><PickButton off label="Indicar ângulo entre itens" /></span>
              </div>
              <div className="mt-[5px] mb-[5px] flex">
                <div className="flex w-[42px] flex-col items-center pr-[10px]">
                  <svg width="20" height="30" viewBox="0 0 20 30" aria-hidden="true">
                    <path d="M10 1a8.500 8.500 0 018.500 8.500c0 5-4 6-4 11h-9c0-5-4-6-4-11A8.500 8.500 0 0110 1z" fill="#fbf8d8" stroke="#c4b53a" strokeWidth="2" />
                    <path d="M8 4h4l-1 8H9zM9 14h2v3H9z" fill="#1f3f7a" />
                    <path d="M6 22h8M6 24.500h8M7 27h6" stroke="#6e6e80" strokeWidth="2" />
                  </svg>
                  <span className="mt-[5px]">Dica</span>
                </div>
                <p className="w-[228px] pt-[2px]">
                  Para o ângulo a preencher, um valor positivo especifica rotação sentido anti-horário. Um valor negativo especifica rotação sentido horário.
                </p>
              </div>
            </fieldset>
            <div className="mt-[11px] flex items-start">
              <label className="flex w-[201px] items-start gap-[3px]">
                <span className="relative mt-[6px] size-[13px] shrink-0">
                  <input type="checkbox" defaultChecked className="block size-[13px] appearance-none rounded-[3px] bg-[#0f5fb0]" />
                  <Ico size={13} className="pointer-events-none absolute left-0 top-0"><path d="M3 6.500l2.500 2.500L10 4.500" stroke="#fff" /></Ico>
                </span>
                <span>Rota<u>c</u>ionar itens à medida que são copiados</span>
              </label>
              <button className="flex h-6 w-[86px] items-center justify-center gap-[10px] border border-[#fff] border-b-2 border-r-2 border-b-[#696969] border-r-[#696969]">
                <span>M<u>a</u>is</span>
                <Ico size={8}><path d="M1 0l3 3 3-3M1 4l3 3 3-3" strokeWidth="1.500" /></Ico>
              </button>
            </div>
          </div>
        </div>
        <div className="ml-2 flex w-[145px] flex-col">
          <button className="mt-[6px] ml-[14px] flex items-start gap-[9px]">
            <span className="flex size-6 items-center justify-center rounded border border-[#cfcfcf] bg-[#fdfdfd]">
              <Ico><path d="M.5 1.500h13v11H.5z" stroke="#3b9a5b" strokeDasharray="2 1" /><path d="M3 4h8v7H3z" fill="#58b47a" stroke="none" /><path d="M9 6v9l2-2 1.500 3 1.400-.8-1.400-2.700H16z" fill="#fff" stroke="#111" strokeWidth=".8" /></Ico>
            </span>
            <span className="whitespace-nowrap pt-[3px]"><u>S</u>elecionar objetos</span>
          </button>
          <p className="mt-[7px] ml-px">1 objetos selecionados</p>
          <ArrayPreview />
          <div className="mt-[15px] mr-[2px] flex flex-col items-end gap-[5px]">
            <button className={push}>OK</button>
            <button className={push}>Cancelar</button>
            <button className={push}><u>V</u>isualizar &lt;</button>
            <button className={push}>Aj<u>u</u>da</button>
          </div>
        </div>
      </div>
    </div>
  );
}

function Canvas() {
  return (
    <main className="relative min-w-0 flex-1 overflow-hidden bg-[#212830]">
      <Scene />
      <div className="relative flex h-7 items-center justify-between pl-[3px] pr-[11px] text-[#e6e8eb]">
        <span>[−][Vista personalizada][Raio X]</span>
        <div className="flex gap-[10px] pt-[2px] text-[#e6e8eb]">
          <button aria-label="Minimizar vista"><Ico size={10}><path d="M0 8h10" strokeWidth="3" /></Ico></button>
          <button aria-label="Restaurar vista"><Ico size={10}><path d="M3 1h6.500v6.500" /><path d="M1 3.500h6V9H1z" strokeWidth="2" /></Ico></button>
          <button aria-label="Fechar vista"><Ico size={10}><path d="M1 1l8 8M9 1L1 9" strokeWidth="2" /></Ico></button>
        </div>
      </div>
      <ViewCube />
      <CommandLine />
      <ArrayDialog />
    </main>
  );
}

/* ---------- layer manager ---------- */

const layers = [
  { name: '0', on: 'sun', color: '#ffffff', label: 'br...' },
  { name: 'A - CUBO', on: 'snow', color: '#ff0000', label: 'ver...' },
  { name: 'B - TETRAEDRO', on: 'snow', color: '#ffff00', label: 'am...' },
  { name: 'C - OCTAEDRO', on: 'snow', color: '#00ff00', label: 'ver...' },
  { name: 'D - DODECAEDRO', on: 'snow', color: '#00ffff', label: 'cia...' },
  { name: 'E - ICOSAEDRO', on: 'sun', color: '#0000ff', label: 'azul' },
];

function LayerTable() {
  const th = 'overflow-hidden border-r border-[#303846] bg-[#454e60] px-[3px] text-left font-normal';
  return (
    <table className="w-full table-fixed border-collapse whitespace-nowrap text-[#e6e8eb]">
      <colgroup>
        <col className="w-[18px]" />
        <col />
        <col className="w-[18px]" />
        <col className="w-[18px]" />
        <col className="w-[18px]" />
        <col className="w-[18px]" />
        <col className="w-12" />
        <col className="w-[8px]" />
      </colgroup>
      <thead>
        <tr className="h-[23px]">
          <th className={th}>S..</th>
          <th className={th}>
            <span className="flex items-center justify-between">
              Nome
              <svg width="7" height="4" viewBox="0 0 7 4" aria-hidden="true"><path d="M0 4h7L3.500 0z" fill="#e6e8eb" /></svg>
            </span>
          </th>
          <th className={th}>A.</th>
          <th className={th}>C.</th>
          <th className={th}>B..</th>
          <th className={th}>P..</th>
          <th className={th}>Cor</th>
          <th className={th}>T</th>
        </tr>
      </thead>
      <tbody>
        {layers.map((l, i) => (
          <tr key={l.name} className={`h-[18px] leading-[18px] ${i === 2 ? 'bg-[#7286a6]' : ''}`}>
            <td className="pl-[2px]">
              {i === 5 ? (
                <Ico size={14}><path d="M2 7l3.500 4L12 3" stroke="#5fc489" strokeWidth="2" /></Ico>
              ) : (
                <Ico size={14}><path d="M5 4h9l-5 6H0z" fill="#8cc4f0" stroke="none" /></Ico>
              )}
            </td>
            <td className="border-r-2 border-[#303846] pl-[2px]">{l.name}</td>
            <td className="pl-px"><Bulb /></td>
            <td className="pl-px">{l.on === 'sun' ? <Sun /> : <Snow />}</td>
            <td className="pl-px"><Unlock /></td>
            <td className="pl-px"><Printer /></td>
            <td>
              <span className="flex items-center gap-1 pl-[3px]">
                <span className="size-3 shrink-0 border border-black" style={{ backgroundColor: l.color }} />
                {l.label}
              </span>
            </td>
            <td className="overflow-hidden pl-[3px]">C</td>
          </tr>
        ))}
      </tbody>
    </table>
  );
}

function LayerManager() {
  return (
    <aside className="flex w-[371px] shrink-0 flex-col border-l-2 border-[#2c333e] bg-[#3b4453] pl-[2px] text-[#e6e8eb]">
      <h2 className="mt-px flex h-5 items-center gap-[7px] rounded-t bg-[#2d3340] pl-[5px] whitespace-nowrap">
        <svg width="3" height="10" viewBox="0 0 3 10" aria-hidden="true"><path d="M.5 0v10M2.500 0v10" stroke="#8f949b" strokeDasharray="1 1" /></svg>
        GERENCIADOR DE PROPRIEDADES DE CAMADA
      </h2>
      <div className="flex h-8 items-start justify-between pl-1">
        <span className="pt-3">Camada atual: E - ICOSAEDRO</span>
        <label className="mt-2 flex h-4 w-[125px] items-center bg-[#4a5468]">
          <input aria-label="Pesquisar camada" placeholder="Pesquisar camada" className="mr-[2px] w-[108px] text-[11px] placeholder:text-[#a9afb9]" />
          <Magnifier />
        </label>
      </div>
      <div className="flex h-[21px] items-center text-[#d5d8dc]">
        <Ico className="ml-[2px]"><path d="M0 1h5l1 2h9v3H8v5H0z" fill="currentColor" stroke="none" /><path d="M7 7h9l-3.500 4v4H11v-4z" fill="#b4b9c0" stroke="none" /></Ico>
        <Ico className="ml-2"><path d="M0 2h6l1 2h8v10H0z" fill="currentColor" stroke="none" /></Ico>
        <span className="mx-[7px] h-[18px] w-px bg-[#7b828e]" />
        <div className="flex gap-[7px]">
          <LayerIcon badge="doc" />
          <span className="ml-[3px]"><LayerIcon badge="star" /></span>
          <LayerIcon badge="freeze" />
          <LayerIcon badge="delete" />
          <LayerIcon badge="check" />
        </div>
        <div className="ml-auto mr-[9px] flex gap-[7px]">
          <Ico><path d="M2 7a6 6 0 0110-3M14 9a6 6 0 01-10 3" stroke="#5fc489" strokeWidth="2" /><path d="M14.500 1v6h-6zM1.500 15V9h6z" fill="#5fc489" stroke="none" /></Ico>
          <Ico><path d="M1 1h8v9H1z" fill="currentColor" stroke="none" /><path d="M10 8h5l-4 6H2l2-3h6z" fill="#7b828e" stroke="none" /></Ico>
          <Ico><circle cx="8" cy="8" r="4.200" strokeWidth="3" /><circle cx="8" cy="8" r="6.700" strokeWidth="2.500" strokeDasharray="2.600 2.660" /></Ico>
        </div>
      </div>
      <div className="flex min-h-0 flex-1">
        <div className="mr-1 flex w-[26px] flex-col items-center justify-between border border-[#303846] pt-1 pb-[3px] pl-[2px]">
          <button aria-label="Expandir árvore"><Ico size={13}><path d="M2 2.500l4 4-4 4M7 2.500l4 4-4 4" strokeWidth="2" /></Ico></button>
          <button aria-label="Expandir filtros"><Ico size={13}><path d="M2 2.500l4 4-4 4M7 2.500l4 4-4 4" strokeWidth="2" /></Ico></button>
        </div>
        <div className="flex min-w-0 flex-1 flex-col">
          <LayerTable />
          <div className="mr-[127px] flex-1 border-r-2 border-[#303846]" />
          <div className="flex h-[17px] items-center bg-[#f0f0f0] pl-[17px]">
            <span className="h-[2px] w-[71px] bg-[#858585]" />
          </div>
        </div>
      </div>
      <footer className="flex h-10 items-center pt-[10px] text-[11px]">
        <Ico><path d="M0 1h5l1 2h6v11H0z" fill="currentColor" stroke="none" /><path d="M12 6l-4 5h3l-1 5 5-7h-3z" fill="#f3c878" stroke="#3b4453" strokeWidth=".5" /></Ico>
        <Caret className="ml-1" />
        <span className="ml-[6px] whitespace-nowrap">Todos: 6 camadas exibidas de 6 camadas totais</span>
      </footer>
    </aside>
  );
}

/* ---------- status bar ---------- */

function Cell({ children, on = false, wide = false, label }: { children: ReactNode; on?: boolean; wide?: boolean; label: string }) {
  return (
    <button aria-label={label} aria-pressed={on} className={`flex h-[23px] items-center justify-center ${wide ? 'w-6' : 'w-[22px]'} ${on ? 'bg-[#5f8cc0] text-white' : 'bg-[#333c49]'}`}>
      {children}
    </button>
  );
}

function CaretCell({ className = 'w-[18px]' }: { className?: string }) {
  return <span className={`flex h-[23px] items-center justify-center bg-[#333c49] ${className}`}><Caret /></span>;
}

function StatusBar() {
  const person = <path d="M8 1l2 5 1 3 3 5-4-2.500H6L2 14l3-5 1-3z" fill="currentColor" stroke="none" />;
  return (
    <footer className="flex h-[27px] items-start justify-between border-t border-[#4a4f57] bg-[#222833] text-[#d5d8dc]">
      <nav className="flex h-[17px] pl-[10px] text-[11px] text-[#b4b9c0]">
        <button className="w-[70px] rounded-b-lg bg-[#3b4453] font-bold text-white">Modelo</button>
        <button className="w-[58px] rounded-b-lg bg-[#2d3440]">Layout1</button>
        <button className="ml-[6px] w-[60px] rounded-b-lg bg-[#2d3440]">Layout2</button>
        <button aria-label="Novo layout" className="ml-[8px] flex w-5 items-center justify-center rounded-b bg-[#2d3440]"><Ico size={9}><path d="M4.500 0v9M0 4.500h9" strokeWidth="2" /></Ico></button>
      </nav>
      <div className="mr-[2px] flex items-center pt-px">
        <button className="mr-1 h-[23px] bg-[#333c49] px-[3px]">MODELO</button>
        <Cell on label="Grade"><Ico><path d="M4.500 0v16M8.500 0v16M12.500 0v16M0 4.500h16M0 8.500h16M0 12.500h16" /></Ico></Cell>
        <Cell wide label="Snap"><Ico><path d="M2 3h12M2 8h12M2 13h12" strokeWidth="2" strokeDasharray="2 3" /></Ico></Cell>
        <CaretCell className="mr-1 w-[17px]" />
        <Cell on label="Entrada dinâmica"><Ico><path d="M0 5h6M3 2v6" /><path d="M5 9h11v5H5z" fill="currentColor" stroke="none" /><path d="M7 10v3" stroke="#5f8cc0" /></Ico></Cell>
        <Cell wide label="Orto"><Ico><path d="M1.500 1v13.500H16M1.500 10.500h4v4" /></Ico></Cell>
        <Cell wide label="Polar"><Ico><circle cx="7" cy="9" r="5.500" /><path d="M7 9h9M7 9l7-8M11 4v5" /></Ico></Cell>
        <CaretCell className="w-[19px]" />
        <Cell label="Desenho isométrico"><Ico><path d="M2 1l12 14" stroke="#d66a6a" /><path d="M8 0v16" stroke="#6fbf73" /></Ico></Cell>
        <CaretCell className="w-[19px]" />
        <Cell on label="Rastreamento"><Ico><path d="M14 1L2 13.500h13" /><path d="M6 7h4v4H6z" fill="currentColor" stroke="none" /></Ico></Cell>
        <span className="w-[2px]" />
        <Cell on label="Snap ao objeto"><Ico><path d="M5 3.500h9.500v11h-12V6" /><path d="M.5 .5h4v4h-4z" /></Ico></Cell>
        <CaretCell className="mr-[3px] w-[18px]" />
        <Cell on label="Visibilidade da anotação"><Ico>{person}<circle cx="13" cy="3.500" r="2.200" /></Ico></Cell>
        <span className="w-[2px]" />
        <Cell label="Escala automática"><Ico>{person}<path d="M14 0l-3 4h3l-2 4" /></Ico></Cell>
        <Cell wide label="Escala de anotação"><Ico>{person}</Ico></Cell>
        <button className="flex h-[23px] items-center gap-[5px] bg-[#333c49] px-1 text-[11px]">1:1<Caret /></button>
        <span className="w-1" />
        <Cell label="Espaço de trabalho"><Ico><circle cx="8" cy="8" r="4.200" strokeWidth="3" /><circle cx="8" cy="8" r="6.700" strokeWidth="2.500" strokeDasharray="2.600 2.660" /></Ico></Cell>
        <CaretCell className="mr-[2px] w-[18px]" />
        <Cell label="Monitor de anotação"><Ico><path d="M8 0v16M0 8h16" strokeWidth="2" /></Ico></Cell>
        <span className="w-[3px]" />
        <Cell wide label="Isolar objetos"><Ico><path d="M1.500 1.500h5v6h-5z" /><circle cx="12.500" cy="7.500" r="2.800" /><path d="M7 10l3 5H4z" /></Ico></Cell>
        <span className="w-[2px]" />
        <Cell wide label="Desempenho gráfico"><Ico><path d="M3 1h8l3 3v6H3z" fill="#2f86d6" stroke="none" /><path d="M0 8h5v6H0z" fill="#f3c878" stroke="none" /><path d="M6 11l3 4 6-7" stroke="#5fc45f" strokeWidth="2.500" /></Ico></Cell>
        <Cell wide label="Diagnóstico"><Ico><path d="M0 1h15v11H0z" fill="#d5d8dc" stroke="none" /><path d="M1 9l4-6 4 7 4-7" stroke="#3b4453" /><path d="M11 7l5 9H6z" fill="#e8a070" stroke="none" /></Ico></Cell>
        <span className="w-[4px]" />
        <Cell wide label="Tela limpa"><Ico><path d="M.5 2.500h15v11H.5zM9 7l3.500-2.500M10 4.500h2.500V7M7 9l-3.500 2.500M3.500 9v2.500H6" /></Ico></Cell>
        <Cell wide label="Personalização"><Ico><path d="M0 2.500h16M0 8.500h16M0 14h16" strokeWidth="2" /></Ico></Cell>
      </div>
    </footer>
  );
}

export default function App() {
  return (
    <div className="flex min-h-screen flex-col overflow-hidden bg-[#222830] font-['Open_Sans','Noto_Sans',sans-serif] text-[12px] leading-4">
      <TitleBar />
      <RibbonTabs />
      <Ribbon />
      <FileTabs />
      <div className="flex flex-1">
        <Canvas />
        <LayerManager />
      </div>
      <StatusBar />
    </div>
  );
}
